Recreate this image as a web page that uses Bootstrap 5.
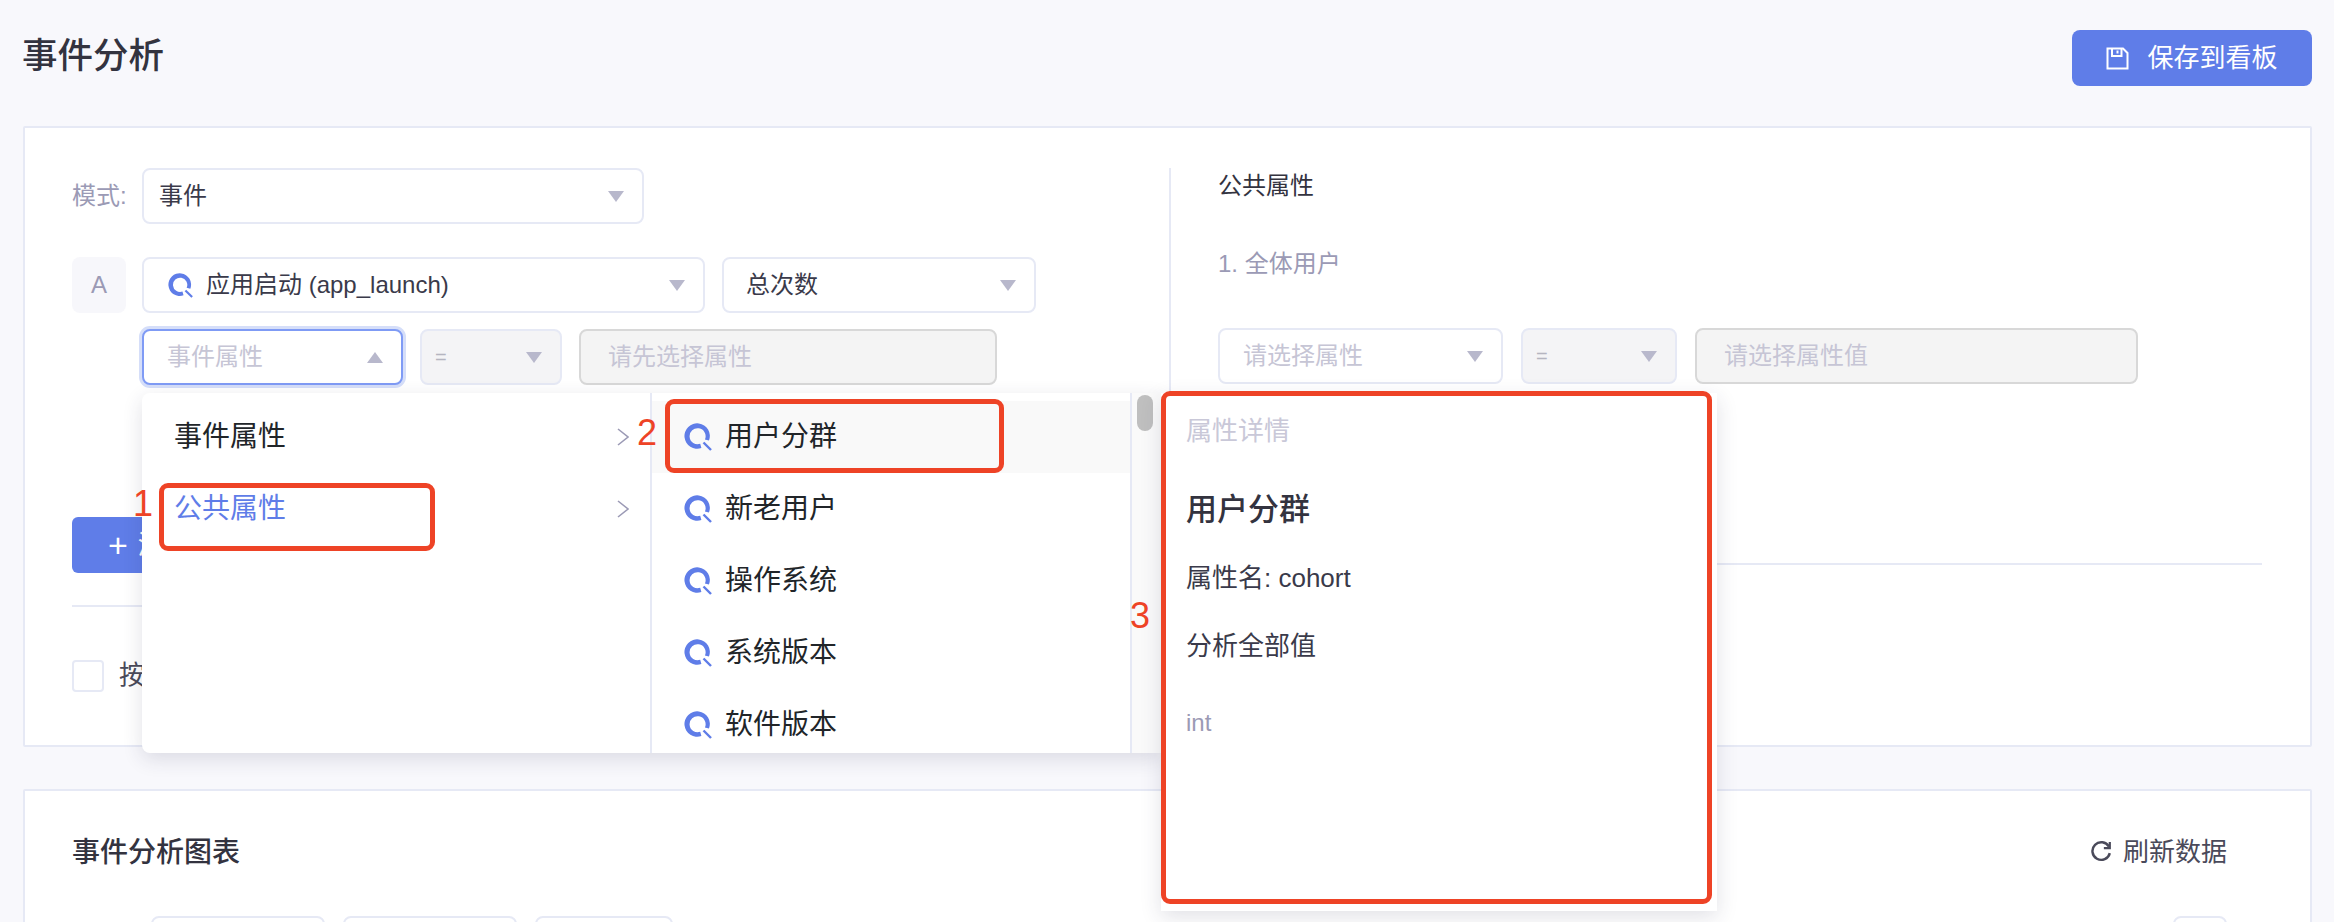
<!DOCTYPE html>
<html lang="zh-CN">
<head>
  <meta charset="UTF-8">
  <meta name="viewport" content="width=device-width, initial-scale=1.0">
  <title>事件分析</title>
  <link href="https://cdn.jsdelivr.net/npm/bootstrap@5.3.0/dist/css/bootstrap.min.css" rel="stylesheet">
  <style>
    html, body { height: 100vh; overflow: hidden; }
    body { background: #f8f8fc; color: #3a3a4a; padding: 0 22px 0 23px; font-family: "Liberation Sans", "Noto Sans CJK SC", sans-serif; font-size: 24px; }
    .page-head { height: 126px; }
    .page-title { font-size: 35.5px; font-weight: 500; line-height: 50px; margin: 31px 0 0 -1px; color: #33333f; }
    .save-btn { width: 240px; height: 56px; margin-top: 30px; background: #5f7de8; border: 0; border-radius: 8px; font-size: 26px; gap: 18px; }
    .panel-card { border: 2px solid #e6e9f5; border-radius: 2px; background: #fff; }
    .query-card { height: 621px; padding: 40px 48px 0 47px; }
    .query-left { flex: 0 0 1097px; padding-right: 48px; }
    .query-right { flex: 1; border-left: 2px solid #e6e9f5; padding-left: 47px; }
    .mode-label { width: 70px; color: #9b9ab5; }
    .pick { height: 56px; border: 2px solid #e6e9f5; border-radius: 8px; background: #fff; padding: 0 18px 0 15px; line-height: 1; }
    .pick.ph { color: #c6c5d5; padding-left: 23px; }
    .pick.off { background: #f4f4f6; color: #b5b5c0; padding-left: 13px; font-size: 20px; }
    .pick.on { border-color: #7f9bf5; box-shadow: 0 0 0 3px #d5def9; }
    .pick.count { padding-left: 22px; }
    .w-mode { width: 502px; }
    .w-event { width: 563px; }
    .w-count { width: 314px; }
    .w-attr { width: 261px; }
    .w-eq { width: 142px; }
    .w-val { width: 418px; }
    .w-attr2 { width: 285px; }
    .w-eq2 { width: 156px; }
    .w-val2 { width: 443px; }
    .val-box { height: 56px; border: 2px solid #d8d8d8; border-radius: 8px; background: #f4f4f4; padding: 0 27px; font-size: 24px; }
    .val-box:disabled { background: #f4f4f4; }
    .val-box::placeholder { color: #c6c5d5; opacity: 1; }
    .caret-down, .caret-up { width: 0; height: 0; border-left: 8.5px solid transparent; border-right: 8.5px solid transparent; flex: none; }
    .caret-down { border-top: 11px solid #b8b8cc; }
    .caret-up { border-bottom: 11px solid #b8b8cc; }
    .series-tag { width: 54px; height: 56px; margin-right: 16px; background: #f7f7fb; border-radius: 8px; color: #9b9ab5; }
    .row-a { margin-top: 33px; }
    .row-b { margin: 16px 0 0 70px; gap: 17px; }
    .event-name { gap: 13px; padding-left: 9px; }
    .event-gap { margin-right: 17px; }
    .add-btn { width: 260px; height: 56px; margin-top: 132px; background: #5f7de8; border: 0; border-radius: 6px; padding: 0 0 0 36px; font-size: 26px; gap: 10px; }
    .add-plus { font-size: 34px; line-height: 1; font-weight: 300; }
    .thin-line { height: 2px; background: #e6e9f5; }
    .left-line { margin-top: 32px; }
    .group-check { margin-top: 49px; gap: 15px; font-size: 26px; color: #4a4a5a; }
    .group-check .form-check-input { width: 32px; height: 32px; margin: 0; border: 2px solid #e6e9f5; border-radius: 4px; }
    .right-title { line-height: 36px; margin-bottom: 42px; color: #33333f; }
    .right-sub { line-height: 36px; color: #9b9ab5; margin-bottom: 46px; }
    .right-line { margin-top: 179px; }
    .right-row { gap: 18px; }
    .attr-anchor { position: relative; }
    .attr-pop { position: absolute; left: 0; top: 64px; z-index: 10; width: 1575px; height: 520px; color: #3a3a4a; }
    .attr-menu { width: 1019px; height: 360px; background: #fff; border-radius: 8px 0 0 8px; box-shadow: 0 6px 20px rgba(40, 40, 80, .14); overflow: hidden; }
    .menu-col1 { width: 508px; padding-top: 8px; }
    .menu-col2 { width: 480px; padding-top: 8px; border-left: 2px solid #e6e9f5; }
    .menu-row { height: 72px; flex: none; border: 0; padding: 0 21px 0 32px; font-size: 28px; background: transparent; }
    .menu-col2 .menu-row { padding: 0 0 0 32px; gap: 13px; }
    .menu-row.current { color: #5f7de8; }
    .menu-row.hovered { background: #f9f9f9; }
    .menu-scroll { width: 31px; border-left: 2px solid #e6e9f5; background: #fafafa; padding: 2px 0 0 5px; }
    .menu-thumb { width: 16px; height: 36px; background: #bfbfbf; border-radius: 8px; }
    .attr-detail { width: 556px; height: 518px; background: #fff; padding: 19px 0 0 25px; box-shadow: 0 6px 20px rgba(40, 40, 80, .14); font-size: 26px; }
    .detail-head { line-height: 38px; color: #c9c8d8; }
    .detail-name { line-height: 44px; font-size: 31px; font-weight: 500; margin-top: 38px; color: #33333f; }
    .detail-line { line-height: 38px; margin-top: 27px; }
    .detail-line + .detail-line { margin-top: 30px; }
    .detail-type { line-height: 34px; font-size: 24px; color: #9b9ab5; margin-top: 41px; }
    .mark-box { position: absolute; border: 5px solid #ee4326; border-radius: 9px; }
    .mark-one { left: 17px; top: 90px; width: 276px; height: 68px; }
    .mark-two { left: 523px; top: 6px; width: 339px; height: 74px; }
    .mark-three { left: 1019px; top: -2px; width: 551px; height: 513px; }
    .mark-num { position: absolute; font-size: 36px; line-height: 1; color: #ee4326; }
    .num-one { left: -9px; top: 93px; }
    .num-two { left: 495px; top: 22px; }
    .num-three { left: 988px; top: 205px; }
    .chart-card { height: 300px; margin-top: 42px; padding: 0 83px 0 47px; }
    .chart-head { height: 125px; padding-top: 43px; }
    .chart-title { font-size: 28px; font-weight: 500; line-height: 38px; color: #33333f; }
    .refresh-link { font-size: 26px; color: #4a4a5a; gap: 11px; line-height: 38px; margin-top: -1px; }
    .chart-pills { padding-left: 79px; gap: 18px; }
    .chart-pill { height: 60px; border: 2px solid #e6e9f5; border-radius: 8px; }
    .pill-wide { width: 174px; }
    .pill-mid { width: 138px; }
    .pill-end { width: 54px; }
  </style>
</head>
<body>

<svg width="0" height="0" class="d-block">
  <symbol id="propIcon" viewBox="0 0 28 28">
    <path d="M17.4 25A12.7 12.7 0 1 1 25 17.6L20.9 16.5A8 8 0 1 0 16.2 20.8Z" fill="#5f7de8"/>
    <path d="M19.5 19.5L27 27" fill="none" stroke="#5f7de8" stroke-width="2.4"/>
  </symbol>
</svg>

<!-- 标题栏 -->
<div class="page-head d-flex justify-content-between align-items-start">
  <h1 class="page-title">事件分析</h1>
  <button class="btn btn-primary save-btn d-flex align-items-center justify-content-center">
    <svg width="23" height="23" viewBox="0 0 23 23" fill="none" stroke="#fff" stroke-width="2">
      <path d="M1.5 1.5H17L21.5 6V21.5H1.5Z"/>
      <path d="M6 1.5V9H15.5V1.5"/>
      <path d="M11.5 3.5V6.5"/>
    </svg>
    <span>保存到看板</span>
  </button>
</div>

<!-- 查询条件 -->
<div class="panel-card query-card d-flex">
  <div class="query-left">
    <div class="d-flex align-items-center">
      <span class="mode-label">模式:</span>
      <div class="pick w-mode d-flex align-items-center justify-content-between"><span>事件</span><i class="caret-down"></i></div>
    </div>

    <div class="d-flex align-items-center row-a">
      <div class="series-tag d-flex align-items-center justify-content-center">A</div>
      <div class="pick w-event event-gap d-flex align-items-center justify-content-between">
        <span class="d-flex align-items-center event-name">
          <svg width="25" height="25"><use href="#propIcon"/></svg>
          应用启动 (app_launch)
        </span>
        <i class="caret-down"></i>
      </div>
      <div class="pick count w-count d-flex align-items-center justify-content-between"><span>总次数</span><i class="caret-down"></i></div>
    </div>

    <div class="d-flex row-b">
      <div class="attr-anchor">
        <div class="pick ph on w-attr d-flex align-items-center justify-content-between"><span>事件属性</span><i class="caret-up"></i></div>

        <!-- 属性下拉 -->
        <div class="attr-pop d-flex align-items-start">
          <div class="attr-menu d-flex">
            <div class="menu-col1 list-group list-group-flush">
              <div class="list-group-item menu-row d-flex align-items-center justify-content-between">
                <span>事件属性</span>
                <svg width="12" height="18" viewBox="0 0 12 18" fill="none" stroke="#9b9ab5" stroke-width="1.6"><path d="M1 1L11 9L1 17"/></svg>
              </div>
              <div class="list-group-item menu-row current d-flex align-items-center justify-content-between">
                <span>公共属性</span>
                <svg width="12" height="18" viewBox="0 0 12 18" fill="none" stroke="#9b9ab5" stroke-width="1.6"><path d="M1 1L11 9L1 17"/></svg>
              </div>
            </div>
            <div class="menu-col2 list-group list-group-flush">
              <div class="list-group-item menu-row hovered d-flex align-items-center"><svg width="28" height="28"><use href="#propIcon"/></svg><span>用户分群</span></div>
              <div class="list-group-item menu-row d-flex align-items-center"><svg width="28" height="28"><use href="#propIcon"/></svg><span>新老用户</span></div>
              <div class="list-group-item menu-row d-flex align-items-center"><svg width="28" height="28"><use href="#propIcon"/></svg><span>操作系统</span></div>
              <div class="list-group-item menu-row d-flex align-items-center"><svg width="28" height="28"><use href="#propIcon"/></svg><span>系统版本</span></div>
              <div class="list-group-item menu-row d-flex align-items-center"><svg width="28" height="28"><use href="#propIcon"/></svg><span>软件版本</span></div>
            </div>
            <div class="menu-scroll"><div class="menu-thumb"></div></div>
          </div>
          <div class="attr-detail">
            <div class="detail-head">属性详情</div>
            <div class="detail-name">用户分群</div>
            <div class="detail-line">属性名: cohort</div>
            <div class="detail-line">分析全部值</div>
            <div class="detail-type">int</div>
          </div>

          <!-- 红色标注 -->
          <div class="mark-box mark-one"></div>
          <div class="mark-box mark-two"></div>
          <div class="mark-box mark-three"></div>
          <span class="mark-num num-one">1</span>
          <span class="mark-num num-two">2</span>
          <span class="mark-num num-three">3</span>
        </div>
      </div>
      <div class="pick off w-eq d-flex align-items-center justify-content-between"><span>=</span><i class="caret-down"></i></div>
      <input class="form-control val-box w-val" disabled placeholder="请先选择属性">
    </div>

    <button class="btn btn-primary add-btn d-flex align-items-center"><span class="add-plus">+</span><span>添加</span></button>
    <div class="thin-line left-line"></div>
    <label class="group-check d-flex align-items-center">
      <input class="form-check-input" type="checkbox">
      <span>按</span>
    </label>
  </div>

  <div class="query-right">
    <div class="right-title">公共属性</div>
    <div class="right-sub">1. 全体用户</div>
    <div class="d-flex right-row">
      <div class="pick ph w-attr2 d-flex align-items-center justify-content-between"><span>请选择属性</span><i class="caret-down"></i></div>
      <div class="pick off w-eq2 d-flex align-items-center justify-content-between"><span>=</span><i class="caret-down"></i></div>
      <input class="form-control val-box w-val2" disabled placeholder="请选择属性值">
    </div>
    <div class="thin-line right-line"></div>
  </div>
</div>

<!-- 图表 -->
<div class="panel-card chart-card">
  <div class="chart-head d-flex justify-content-between align-items-start">
    <div class="chart-title">事件分析图表</div>
    <div class="refresh-link d-flex align-items-center">
      <svg width="22" height="22" viewBox="0 0 20 20" fill="none" stroke="#4a4a5a" stroke-width="2.2">
        <path d="M17.2 5.2A8 8 0 1 0 18 11"/>
        <path d="M18 1V6.4H12.6" stroke-width="2"/>
      </svg>
      <span>刷新数据</span>
    </div>
  </div>
  <div class="d-flex chart-pills">
    <div class="chart-pill pill-wide"></div>
    <div class="chart-pill pill-wide"></div>
    <div class="chart-pill pill-mid"></div>
    <div class="chart-pill pill-end ms-auto"></div>
  </div>
</div>

<script src="https://cdn.jsdelivr.net/npm/bootstrap@5.3.0/dist/js/bootstrap.bundle.min.js"></script>
</body>
</html>
